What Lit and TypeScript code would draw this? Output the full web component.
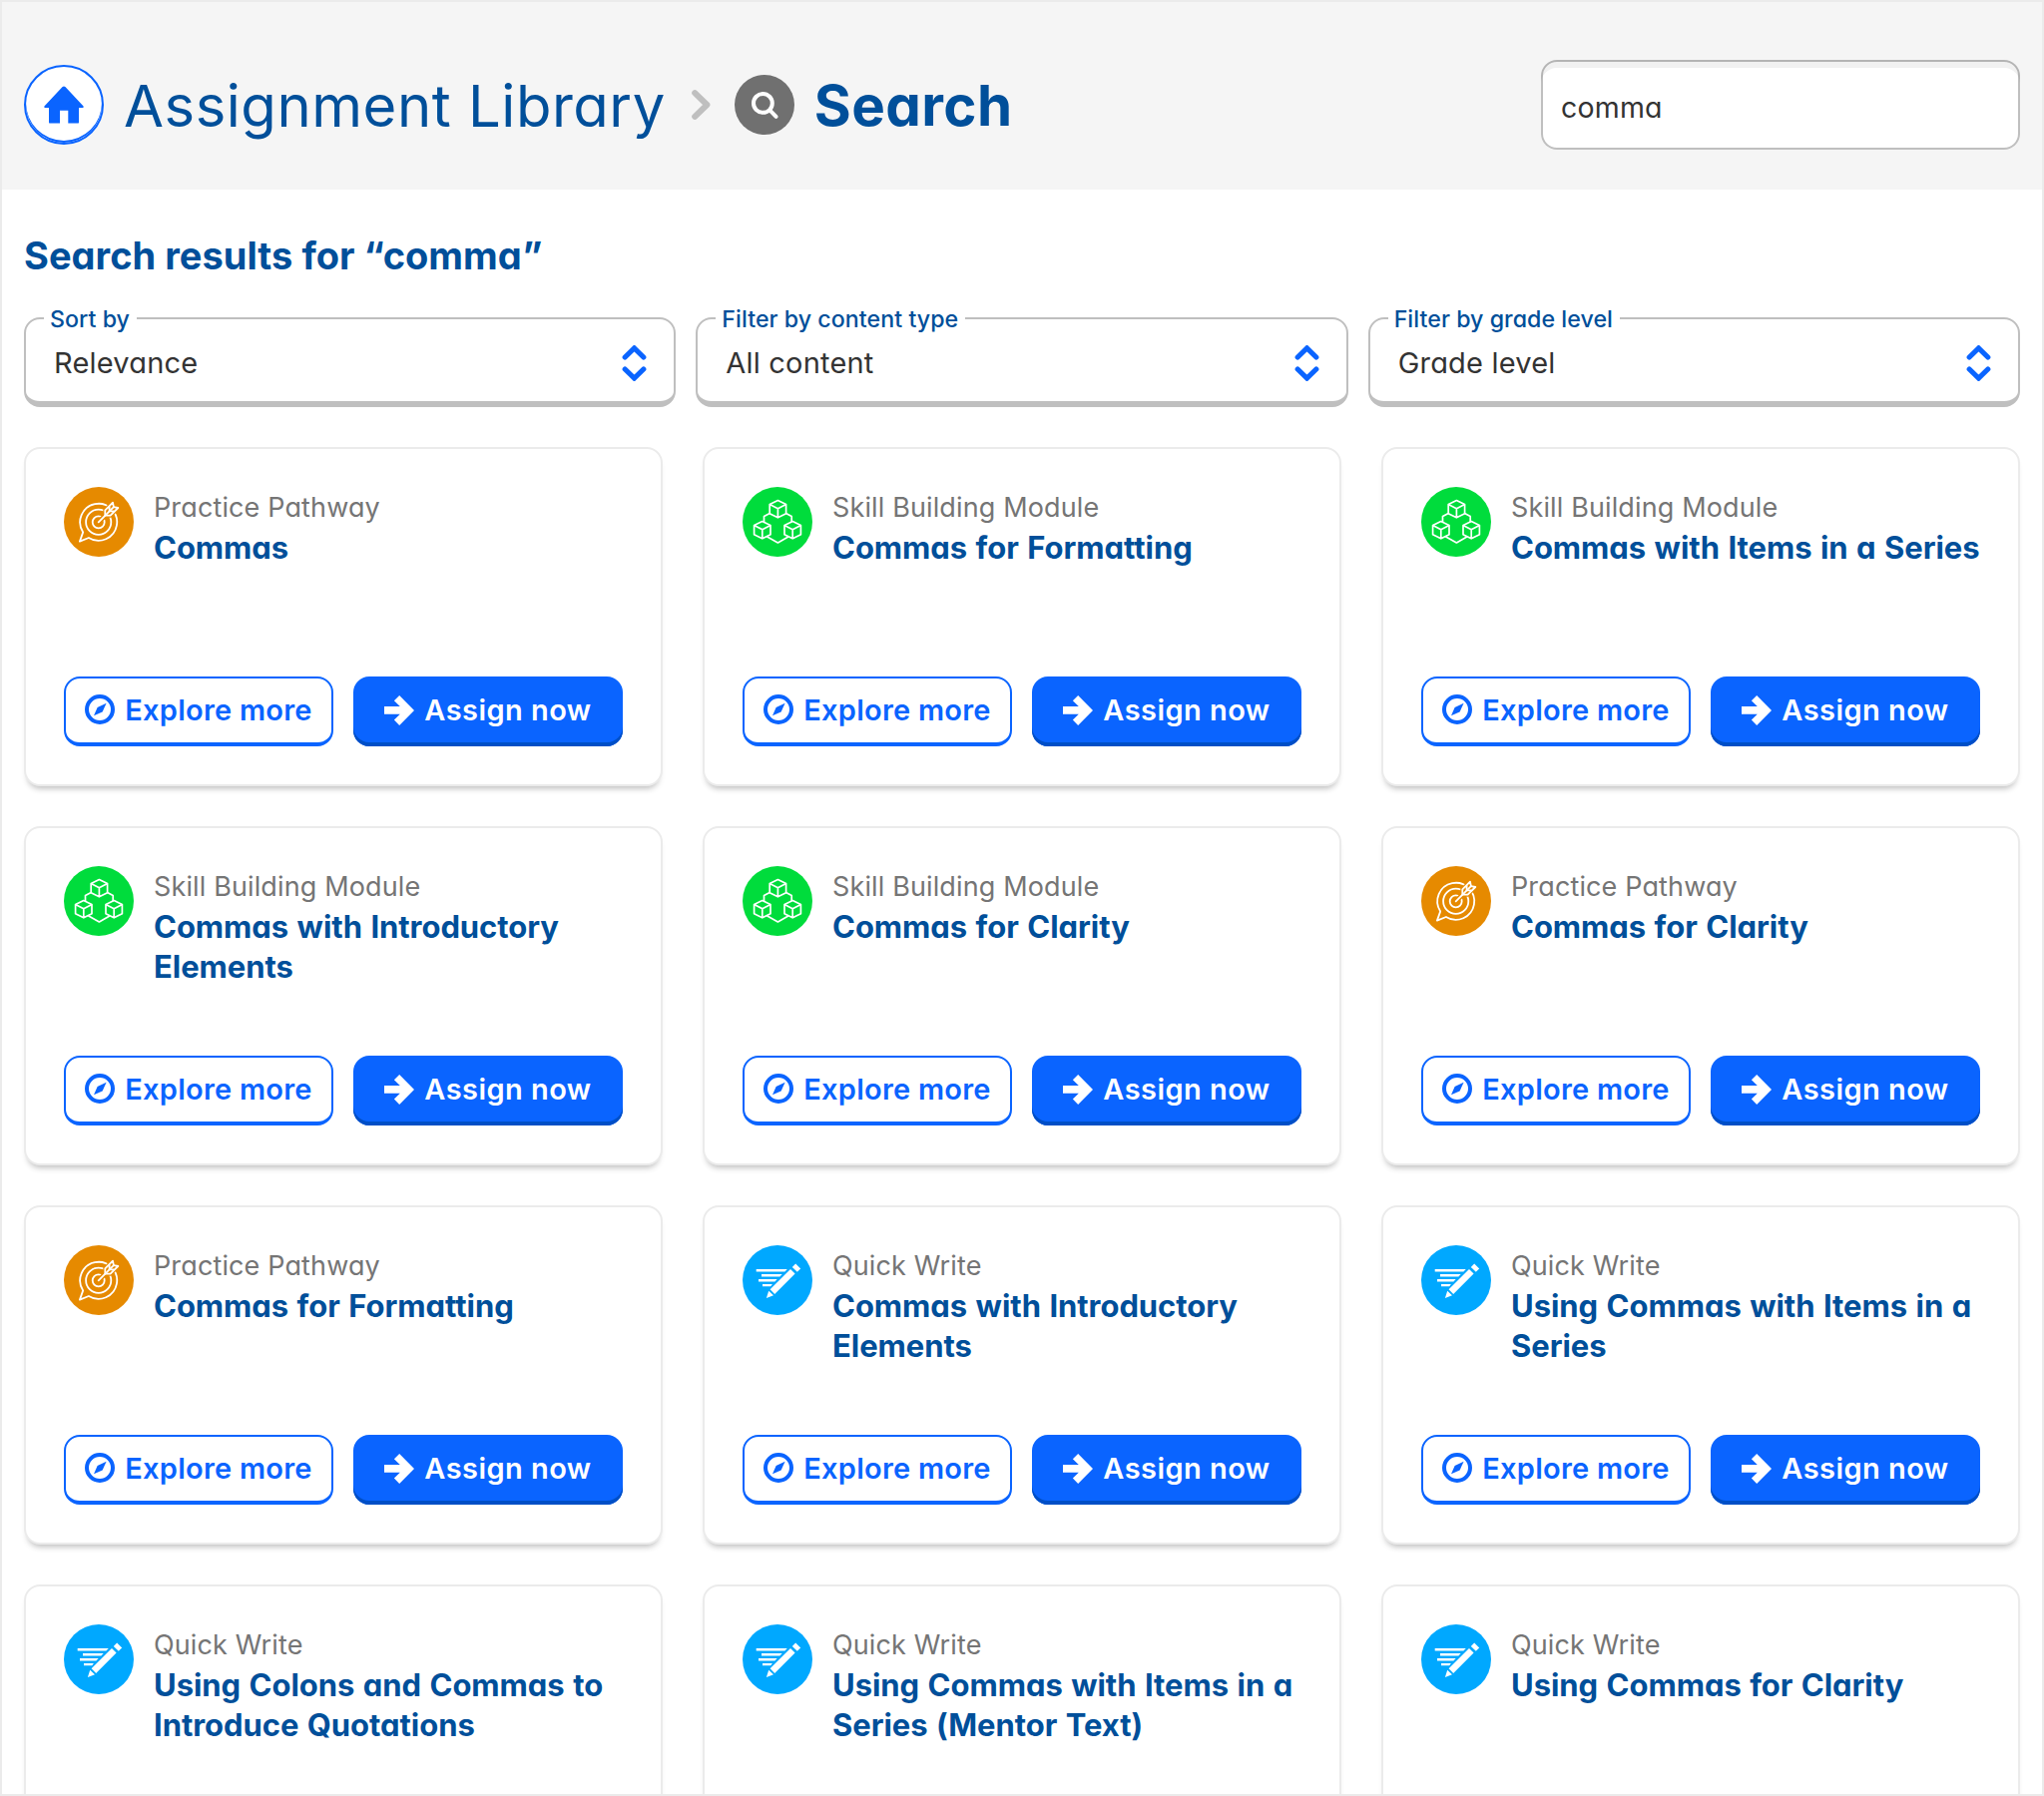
import { LitElement, html, css, svg, nothing } from 'lit';
import { customElement, property } from 'lit/decorators.js';

type Kind = 'pathway' | 'module' | 'write';

interface Result {
  kind: Kind;
  title: string;
  peek?: boolean;
}

const KIND_LABEL: Record<Kind, string> = {
  pathway: 'Practice Pathway',
  module: 'Skill Building Module',
  write: 'Quick Write',
};

// Results flagged "peek" sit on the page's lower edge and show only their heading.
const RESULTS: Result[] = [
  { kind: 'pathway', title: 'Commas' },
  { kind: 'module', title: 'Commas for Formatting' },
  { kind: 'module', title: 'Commas with Items in a Series' },
  { kind: 'module', title: 'Commas with Introductory Elements' },
  { kind: 'module', title: 'Commas for Clarity' },
  { kind: 'pathway', title: 'Commas for Clarity' },
  { kind: 'pathway', title: 'Commas for Formatting' },
  { kind: 'write', title: 'Commas with Introductory Elements' },
  { kind: 'write', title: 'Using Commas with Items in a Series' },
  { kind: 'write', title: 'Using Colons and Commas to Introduce Quotations', peek: true },
  { kind: 'write', title: 'Using Commas with Items in a Series (Mentor Text)', peek: true },
  { kind: 'write', title: 'Using Commas for Clarity', peek: true },
];

const FILTERS = [
  { label: 'Sort by', value: 'Relevance' },
  { label: 'Filter by content type', value: 'All content' },
  { label: 'Filter by grade level', value: 'Grade level' },
];

// One isometric cube, centred on its inner corner.
const cube = (x: number, y: number) => svg`
  <path d="M${x} ${y - 8.5}l8.2 4v9.2l-8.2 4.1l-8.2 -4.1v-9.2zM${x - 8.2} ${y - 4.5}l8.2 4.2l8.2 -4.2M${x} ${y - 0.3}v9.1"></path>`;

const KIND_ART: Record<Kind, unknown> = {
  pathway: svg`
    <circle cx="35" cy="35" r="35" fill="#e68a00"></circle>
    <g fill="none" stroke="#fff" stroke-width="1.8" stroke-linejoin="round" stroke-linecap="round">
      <path d="M24.9 51A18.5 18.5 0 1 0 19.2 45.4L15.9 54.6Z"></path>
      <circle cx="34.7" cy="35.3" r="12.6"></circle>
      <circle cx="34.7" cy="35.3" r="6"></circle>
      <path d="M34.7 35.3L41 29" stroke="#e68a00" stroke-width="4.6"></path>
      <path d="M41.3 28.7V23.4L49 15.7L49.9 20.1L54.3 21L46.6 28.7Z" fill="#e68a00" stroke="#e68a00" stroke-width="4"></path>
      <path d="M34.7 35.3L49.9 20.1"></path>
      <path d="M41.3 28.7V23.4L49 15.7L49.9 20.1L54.3 21L46.6 28.7ZM45.6 19.3V24.4H50.7"></path>
    </g>`,
  module: svg`
    <circle cx="35" cy="35" r="35" fill="#00dc3c"></circle>
    <g fill="none" stroke="#fff" stroke-width="1.7" stroke-linejoin="round">
      ${cube(35.4, 22)}${cube(19.8, 43)}${cube(50.2, 43)}
      <path d="M27.2 26.5L21.5 29.6V35.2M43.6 26.5L49.2 29.6V35.2M24.4 49.7L35.4 55.9L46.2 49.7"></path>
    </g>`,
  write: svg`
    <circle cx="35" cy="35" r="35" fill="#00a8ff"></circle>
    <g fill="#fff">
      <path d="M13.7 24H44.8L42.4 26.4H13.7ZM19 29.1H39.7L37.4 31.4H19ZM16 34.1H34.7L32.4 36.4H16ZM20 38.9H29.9L28.2 41.2H20Z"></path>
      <path d="M27.6 44.3L32.2 48.9L52.6 28.5L48 23.9ZM49.8 21.9L53.2 18.6L58.2 23.4L54.8 26.8ZM26.2 45.7L31 50.2L23.9 53.1Z"></path>
    </g>`,
};

const FONT = css`
  :host {
    font-family: Inter, 'Open Sans', sans-serif;
    font-feature-settings: 'cv11';
  }
`;

@customElement('filter-select')
class FilterSelect extends LitElement {
  @property() label = '';
  @property() value = '';

  static styles = [
    FONT,
    css`
      :host { display: block; }
      .box {
        position: relative;
        box-sizing: border-box;
        height: 90px;
        padding: 5px 27px 0 28px;
        display: flex;
        align-items: center;
        justify-content: space-between;
        border: 2px solid #bfbfbf;
        border-bottom-width: 6px;
        border-radius: 16px;
        background: #fff;
      }
      .label {
        position: absolute;
        left: 18px;
        top: -12px;
        padding: 0 7px 0 6px;
        background: #fff;
        color: #004f9a;
        font-size: 23.2px;
        font-weight: 500;
        line-height: 24px;
        letter-spacing: 0.05px;
        white-space: nowrap;
      }
      .value {
        color: #333;
        font-size: 29px;
        line-height: 36px;
        letter-spacing: 0.2px;
      }
      .arrows { display: block; width: 25px; height: 36px; }
    `,
  ];

  render() {
    return html`
      <div class="box">
        <span class="label">${this.label}</span>
        <span class="value">${this.value}</span>
        <svg class="arrows" viewBox="0 0 25 36" fill="none" stroke="#0a64ff" stroke-width="5.2" stroke-linecap="round">
          <path d="M3.2 12L12.5 3L21.8 12M3.2 24L12.5 33L21.8 24"></path>
        </svg>
      </div>
    `;
  }
}

@customElement('result-card')
class ResultCard extends LitElement {
  @property({ attribute: false }) item!: Result;

  static styles = [
    FONT,
    css`
      :host { display: block; }
      .card {
        box-sizing: border-box;
        height: 340px;
        padding: 38px;
        display: flex;
        flex-direction: column;
        justify-content: space-between;
        border: 2px solid #ebebeb;
        border-radius: 16px;
        background: #fff;
        box-shadow: 0 6px 6px -4px rgba(0, 0, 0, 0.28);
      }
      .head { display: flex; gap: 20px; }
      .art { flex: none; display: block; width: 70px; height: 70px; }
      .text { padding-top: 1px; line-height: 40px; }
      .kind { color: #757575; font-size: 27px; font-weight: 400; letter-spacing: 0.13px; }
      .title { color: #004f9a; font-size: 31px; font-weight: 700; letter-spacing: -0.05px; word-spacing: 1.2px; width: 474px; margin-right: -10px; }
      .actions { display: flex; gap: 20px; }
      .btn {
        box-sizing: border-box;
        width: 270px;
        height: 70px;
        padding: 0 0 2px;
        display: flex;
        align-items: center;
        justify-content: center;
        gap: 10px;
        border: 2px solid #0a64ff;
        border-bottom-width: 4px;
        border-radius: 16px;
        background: #fff;
        color: #0a64ff;
        font: inherit;
        font-size: 29px;
        font-weight: 600;
        line-height: 36px;
        letter-spacing: 0.25px;
      }
      .primary {
        border: 0;
        padding: 0 0 2px;
        background: #0a64ff;
        box-shadow: inset 0 -4px 0 #004fc6;
        color: #fff;
        letter-spacing: 0.45px;
      }
      .word { padding-top: 1px; }
      .primary .word { padding-top: 0; }
      .icon { flex: none; display: block; width: 30px; height: 30px; }
      .primary .icon { margin-top: -1px; }
    `,
  ];

  render() {
    return html`
      <article class="card">
        <div class="head">
          <svg class="art" viewBox="0 0 70 70">${KIND_ART[this.item.kind]}</svg>
          <div class="text">
            <div class="kind">${KIND_LABEL[this.item.kind]}</div>
            <div class="title">${this.item.title}</div>
          </div>
        </div>
        ${this.item.peek ? nothing : this.renderActions()}
      </article>
    `;
  }

  private renderActions() {
    return html`
      <div class="actions">
        <button class="btn">
          <svg class="icon" viewBox="0 0 30 30">
            <circle cx="15" cy="15" r="13" fill="none" stroke="currentColor" stroke-width="4"></circle>
            <path fill="currentColor" d="M21.6 8.7L17.6 17.4L9 21.3L12.6 12.9Z"></path>
          </svg>
          <span class="word">Explore more</span>
        </button>
        <button class="btn primary">
          <svg class="icon" viewBox="0 0 30 30">
            <path fill="currentColor" d="M0 11H15.8L9.9 5.3L15.2 0L30 15L15.2 30L9.9 24.6L15.8 18.8H0Z"></path>
          </svg>
          <span class="word">Assign now</span>
        </button>
      </div>
    `;
  }
}

@customElement('app-root')
class AppRoot extends LitElement {
  static styles = [
    FONT,
    css`
      :host { display: block; }
      .page {
        box-sizing: border-box;
        height: 1800px;
        overflow: hidden;
        border: 2px solid #ebebeb;
        background: #fff;
      }
      .top {
        box-sizing: border-box;
        height: 188px;
        padding: 18px 22px 0;
        display: flex;
        align-items: center;
        justify-content: space-between;
        background: #f5f5f5;
      }
      .crumbs { display: flex; align-items: center; color: #004f9a; white-space: nowrap; }
      .home {
        box-sizing: border-box;
        width: 80px;
        height: 80px;
        display: flex;
        align-items: center;
        justify-content: center;
        border: 2px solid #0a64ff;
        border-radius: 50%;
        background: #fff;
        box-shadow: inset 0 -2px 0 #0a64ff;
      }
      .house { display: block; width: 40px; height: 38px; }
      .library { margin-left: 20px; padding-top: 2px; font-size: 58px; font-weight: 400; letter-spacing: 0.52px; line-height: 70px; }
      .chevron { display: block; width: 19px; height: 30px; margin-left: 26px; }
      .lens { display: block; width: 60px; height: 60px; margin-left: 24px; }
      .here { margin-left: 20px; padding-top: 2px; font-size: 56.5px; font-weight: 700; letter-spacing: 0.4px; line-height: 70px; }
      .query {
        box-sizing: border-box;
        width: 480px;
        height: 90px;
        padding: 5px 20px 0;
        border: 0;
        outline: 0;
        border-radius: 16px;
        background: #fff;
        box-shadow: inset 0 8px 0 rgba(0, 0, 0, 0.055), inset 0 0 0 2px #bfbfbf;
        color: #333;
        font: inherit;
        font-size: 28.5px;
        letter-spacing: 0.2px;
        font-feature-settings: 'cv11';
      }
      .body { padding: 41px 22px 0; }
      .heading { margin: 0; color: #004f9a; font-size: 38px; font-weight: 700; letter-spacing: 0.03px; line-height: 50px; }
      .filters { margin-top: 37px; display: grid; grid-template-columns: repeat(3, 1fr); gap: 20px; }
      .results { margin-top: 40px; display: grid; grid-template-columns: repeat(3, 1fr); gap: 40px; }
    `,
  ];

  render() {
    return html`
      <main class="page">
        <header class="top">
          <nav class="crumbs">
            <span class="home">
              <svg class="house" viewBox="0 0 40 38" fill="#0a64ff">
                <path d="M20 0.4Q20.7 0.4 21.4 1.1L39.4 20.2Q40.4 22 38.6 22H35V36.4Q35 37.6 33.8 37.6H24.3V24.8H16V37.6H6.2Q5 37.6 5 36.4V22H1.4Q-0.4 22 0.6 20.2L18.6 1.1Q19.3 0.4 20 0.4Z"></path>
              </svg>
            </span>
            <span class="library">Assignment Library</span>
            <svg class="chevron" viewBox="0 0 19 30" fill="none" stroke="#bfbfbf" stroke-width="6" stroke-linecap="round" stroke-linejoin="round">
              <path d="M3.2 3.2L15.4 15L3.2 26.8"></path>
            </svg>
            <svg class="lens" viewBox="0 0 60 60">
              <circle cx="30" cy="30" r="30" fill="#707070"></circle>
              <g fill="none" stroke="#fff" stroke-width="4" stroke-linecap="round">
                <circle cx="28.4" cy="28.4" r="9.4"></circle>
                <path d="M35.5 35.7L41.6 41.8"></path>
              </g>
            </svg>
            <span class="here">Search</span>
          </nav>
          <input class="query" .value=${'comma'} />
        </header>
        <section class="body">
          <h1 class="heading">Search results for “comma”</h1>
          <div class="filters">
            ${FILTERS.map((f) => html`<filter-select .label=${f.label} .value=${f.value}></filter-select>`)}
          </div>
          <div class="results">
            ${RESULTS.map((r) => html`<result-card .item=${r}></result-card>`)}
          </div>
        </section>
      </main>
    `;
  }
}
